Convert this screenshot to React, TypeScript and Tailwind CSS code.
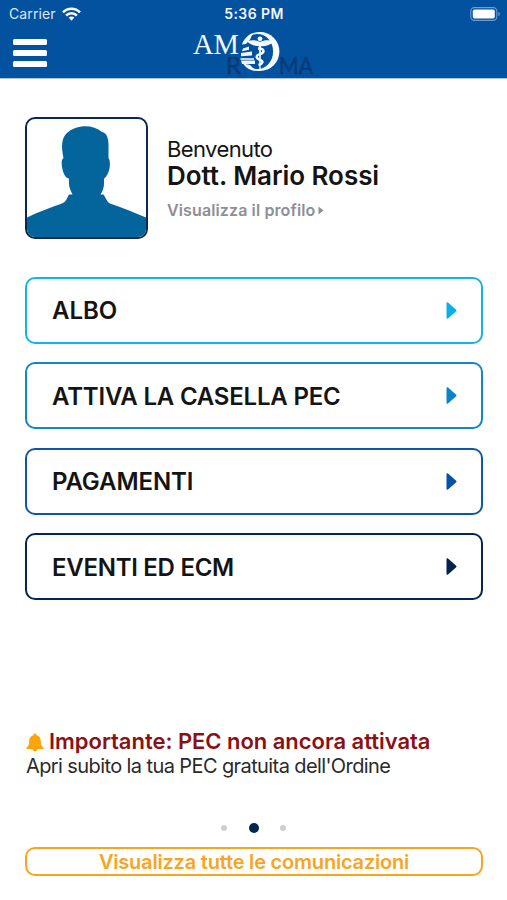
type MenuItem = {
  label: string;
  border: string;
  arrow: string;
  text: string;
};

const MENU: MenuItem[] = [
  { label: "ALBO", border: "border-[#14b4e4]", arrow: "text-[#0cb0e8]", text: "tracking-[0px]" },
  { label: "ATTIVA LA CASELLA PEC", border: "border-[#1585c4]", arrow: "text-[#0a84c8]", text: "tracking-[-0.2px]" },
  { label: "PAGAMENTI", border: "border-[#0f56a8]", arrow: "text-[#0551a8]", text: "tracking-[-0.1px]" },
  { label: "EVENTI ED ECM", border: "border-[#06264f]", arrow: "text-[#04234c]", text: "tracking-[-0.28px]" },
];

function StatusBar() {
  return (
    <div className="grid h-[27px] grid-cols-3 items-center pl-[9px] pr-[6px] text-[14px] leading-[27px]">
      <div className="flex items-center gap-[6px]">
        <span className="tracking-[0.1px] text-[#dce8f5]">Carrier</span>
        <svg width="19" height="14" viewBox="0 0 19 14" fill="none" stroke="#fff" strokeWidth="2.5">
          <path d="M1 5.4C5.8 .5 13.2 .5 18 5.4" />
          <path d="M4.1 8.5c3.1-3 7.7-3 10.8 0" />
          <path d="M6.7 10.6c1.5-1.4 4.1-1.4 5.6 0L9.5 13.7z" fill="#fff" stroke="none" />
        </svg>
      </div>
      <span className="pr-[2px] text-center font-semibold tracking-[0.4px] text-[#f2f7fc]">5:36 PM</span>
      <svg className="justify-self-end" width="31" height="14" viewBox="0 0 31 14">
        <rect x=".8" y=".6" width="26" height="12.8" rx="3.6" fill="none" stroke="#6f9dcf" strokeWidth="1.1" />
        <rect x="2.8" y="2.4" width="22" height="9.2" rx="1.8" fill="#fff" />
        <path d="M28.4 4.8c2 .8 2 3.6 0 4.4z" fill="#6f9dcf" />
      </svg>
    </div>
  );
}

function Logo() {
  return (
    <svg width="134" height="48" viewBox="0 0 134 48">
      <text x="3" y="24" fontFamily="Liberation Serif, serif" fontSize="28.5" fill="#f4f8fc">
        AM
      </text>
      <text x="36" y="44" fontFamily="Lato, sans-serif" fontSize="24" fill="#0b3a79" stroke="#0b3a79" strokeWidth=".6">
        R
      </text>
      <text x="89" y="44" fontFamily="Lato, sans-serif" fontSize="24" fill="#0b3a79" stroke="#0b3a79" strokeWidth=".6" textLength="34" lengthAdjust="spacingAndGlyphs">
        MA
      </text>
      <ellipse cx="70" cy="21.5" rx="19.4" ry="19.6" fill="#f7fbff" />
      <ellipse cx="67.5" cy="21.5" rx="15.6" ry="17.6" fill="#0352a0" />
      {/* steps cut into the left side of the ring */}
      <path d="M49 13L59 13V41L49 33z" fill="#0352a0" />
      <path d="M52 14.500C54.500 8.500 58 5 63 3L60 9.500L56 14z" fill="#f7fbff" />
      <path d="M53 33.500C56 38 60 40.500 66 41L60 35z" fill="#f7fbff" />
      <g fill="#eef5fc">
        <path d="M53 18.500l6-2v3.200l-7 1.500z" />
        <path d="M51 23l11-1.500v4l-11 .8z" />
        <path d="M50.500 28.200h13.500v1.600H50.500z" />
        <path d="M51 30.600h14v3.300H52z" />
      </g>
      {/* winged staff with the snake */}
      <circle cx="70" cy="8.800" r="2.400" fill="#f7fbff" />
      <path d="M57 11.500C61 9.500 66 10 70 12C74 10 79 9.500 84 11.500C81 14.500 76.500 16.300 71 16.200L70.600 40H69.400L69 16.200C64 16 60 14.500 57 11.500z" fill="#f7fbff" />
      <path d="M68 18.500C75 18.500 75 22.500 70 24.200S66 28.500 70 29.800S73 33.500 68.500 35" fill="none" stroke="#f7fbff" strokeWidth="2.400" />
    </svg>
  );
}

function Arrow({ className }: { className: string }) {
  return (
    <svg className={className} width="11" height="17" viewBox="0 0 11 17" fill="currentColor">
      <path d="M.5 1.2C.5.2 1.4 0 2 .6l8.2 7.1c.5.5.5 1.1 0 1.6L2 16.4c-.6.6-1.5.4-1.5-.6z" />
    </svg>
  );
}

function Bell() {
  return (
    <svg className="mt-[2px]" width="18" height="19" viewBox="0 0 18 19" fill="#fca50a">
      <path d="M9 .5C10 .5 10.600 1.200 10.600 2.200C13.500 3 14.800 5.200 14.800 8C14.800 11.500 15.500 13 17.200 14.200C18 15 17.600 16 16.600 16H11.500C11.200 17.600 10.300 18.500 9 18.500S6.800 17.600 6.500 16H1.400C.4 16 0 15 .8 14.200C2.500 13 3.200 11.500 3.200 8C3.200 5.200 4.500 3 7.400 2.200C7.400 1.200 8 .5 9 .5z" />
    </svg>
  );
}

export default function App() {
  return (
    <div className="flex h-[900px] w-[507px] flex-col bg-white font-['Inter',sans-serif] text-[#141414]">
      <header className="h-[79px] border-b border-[#a9c6e6] bg-[#0352a0]">
        <StatusBar />
        <div className="grid grid-cols-[177px_1fr] items-start pl-[13px]">
          <div className="flex flex-col gap-[5px] pt-3">
            <div className="h-[6px] w-[34px] rounded-[1.5px] bg-white" />
            <div className="h-[6px] w-[34px] rounded-[1.5px] bg-white" />
            <div className="h-[6px] w-[34px] rounded-[1.5px] bg-white" />
          </div>
          <div className="pt-[3px]">
            <Logo />
          </div>
        </div>
      </header>

      <section className="flex gap-[19px] pl-[25px] pt-[38px]">
        <div className="h-[122px] w-[123px] overflow-hidden rounded-[10px] border-[2px] border-[#0a2950]">
          <svg width="119" height="118" viewBox="0 0 119 118">
            <path
              d="M0 98.5C11 93 24 88.500 35 84.500C39 83 40 79 42 75.500H45.500C44 72 42.500 70 42 65V59.500C37 59 35 50 34.700 45C34.500 42 35 40 36.500 39C34 27 34.500 19 40 14C49 5.500 66 5 75 13C80 13.500 81.500 20 81.500 26V39C84 42 83 52 80 56C79 58 78 59 77 59.500V64C77 70 75 73 73.500 75.500H76.500C79 79 80 83 83 84.500C95 88.500 108 94 119 98.500V118H0Z"
              fill="#03659c"
            />
          </svg>
        </div>
        <div className="flex flex-col items-start pt-5">
          <div className="text-[22px] leading-[25px] tracking-[-0.6px]">Benvenuto</div>
          <div className="text-[26px] font-semibold leading-[27px] tracking-[-0.05px]">Dott. Mario Rossi</div>
          <div className="mt-[11px] flex items-center gap-[3px] text-[16px] font-semibold leading-5 tracking-[0.12px] text-[#8e8e96]">
            <span>Visualizza il profilo</span>
            <svg width="6" height="9" viewBox="0 0 6 9" fill="currentColor">
              <path d="M.5.500L5.500 4.500L.5 8.500Z" />
            </svg>
          </div>
        </div>
      </section>

      <nav className="mt-[37.9px] flex flex-col gap-[18.5px] pl-[25px] pr-[24.5px]">
        {MENU.map((item) => (
          <div
            key={item.label}
            className={`flex h-[67px] items-center justify-between rounded-[10px] border-[2px] pl-[25px] pr-6 ${item.border}`}
          >
            <span className={`pt-[1.5px] text-[24px] font-semibold leading-7 ${item.text}`}>{item.label}</span>
            <Arrow className={item.arrow} />
          </div>
        ))}
      </nav>

      <section className="mt-[128.1px] pl-[26px]">
        <div className="flex items-center gap-[5px] text-[#8b1014]">
          <Bell />
          <span className="text-[22px] font-semibold leading-[26px] tracking-[-0.03px]">
            Importante: PEC non ancora attivata
          </span>
        </div>
        <div className="text-[20px] leading-6 tracking-[-0.6px] text-[#2a2a2a]">Apri subito la tua PEC gratuita dell'Ordine</div>
      </section>

      <div className="mt-auto flex items-center justify-center gap-[21.5px] pb-[14px]">
        <div className="size-[6px] rounded-full bg-[#cfcfcf]" />
        <div className="size-[10px] rounded-full bg-[#04264f]" />
        <div className="size-[6px] rounded-full bg-[#cfcfcf]" />
      </div>
      <div className="mb-6 ml-[25px] mr-[24px] flex h-[29px] items-center justify-center rounded-[10px] border-[2px] border-[#f8a51d] text-[20px] font-semibold leading-6 tracking-[-0.2px] text-[#f8a51d]">
        Visualizza tutte le comunicazioni
      </div>
    </div>
  );
}
